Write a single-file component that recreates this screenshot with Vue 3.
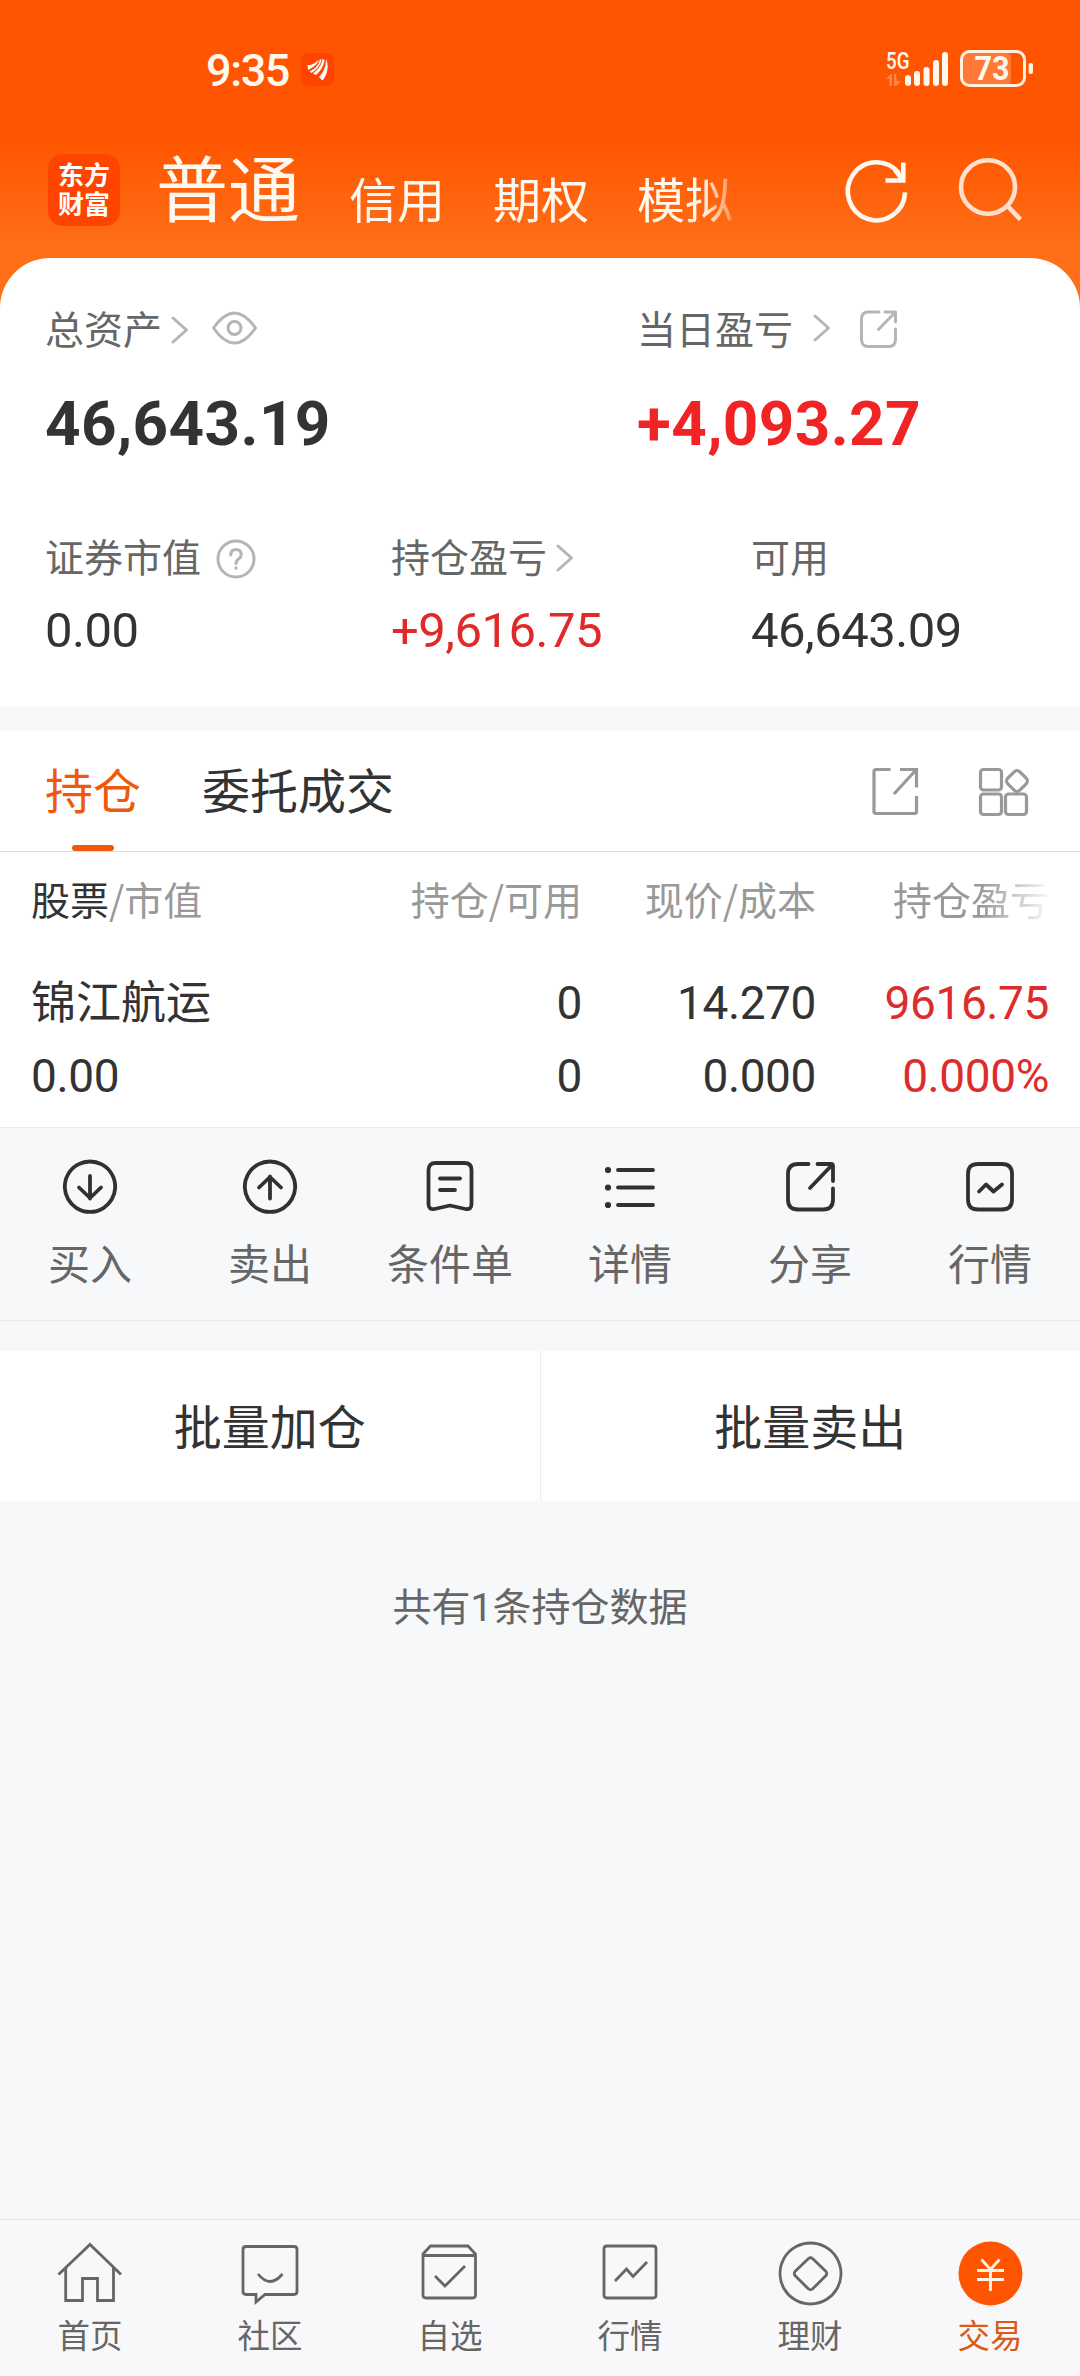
<script setup>
const accounts = ['信用', '期权', '模拟']

const columns = [
  { head: '持仓/可用', top: '0', bottom: '0', cls: 'c2' },
  { head: '现价/成本', top: '14.270', bottom: '0.000', cls: 'c3' },
  { head: '持仓盈亏', top: '9616.75', bottom: '0.000%', cls: 'c4' },
]

const actions = [
  { label: '买入', d: ['M31 3.500a25.200 25.200 0 1 1-.01 0z', 'M31 18v22.500M20 29.500l11 10.500 11-10.500'] },
  { label: '卖出', d: ['M31 3.500a25.200 25.200 0 1 1-.01 0z', 'M31 40.500V18.500M20 29.500l11-10.500 11 10.500'] },
  { label: '条件单', d: ['M16.500 5h29q7 0 7 7v34q0 6-6 5L31 47.500 15.500 51q-6 1-6-5V12q0-7 7-7z', 'M21 20.500h20M21 32h15'] },
  { label: '详情', d: ['M19 12h35M19 29.500h35M19 47h35'], dots: [12, 29.5, 47] },
  { label: '分享', d: ['M29.500 6H19Q9 6 9 16v25.500q0 10 10 10h25q10 0 10-10V30.500', 'M38.500 6H52q2 0 2 2v15M53 7L31 30'] },
  { label: '行情', d: ['M19 6h24q10 0 10 10v25.500q0 10-10 10H19q-10 0-10-10V16Q9 6 19 6z', 'M20 33.500l7-7 7.500 7 8.500-7'] },
]

const nav = [
  { label: '首页', d: ['M.5 33.500L32 3.500l31 30', 'M7.700 27v32.500H24.500V37.500h15v22H55.500V27'] },
  { label: '社区', d: ['M8 5.500h48q3 0 3 3v42q0 3-3 3H27l-9 7.500v-7.500H8q-3 0-3-3v-42q0-3 3-3z', 'M20 33q12 15 24.500 0'] },
  { label: '自选', d: ['M5 13l7.500-8h37.500l7.500 8v41q0 3-3 3H8q-3 0-3-3zM5 14.500H57.500', 'M17 35l10 10L47 25'] },
  { label: '行情', d: ['M9 5h46q3 0 3 3v46q0 3-3 3H9q-3 0-3-3V8q0-3 3-3z', 'M17 40l11.500-12 6.500 7.500L49 21'] },
  { label: '理财', d: ['M32.500 2a30.500 30.500 0 1 1-.01 0z', 'M34.500 17.500l13.500 13q1.500 2 0 4l-13.500 13.500q-2 1.500-4 0L17 34.500q-1.500-2 0-4l13.500-13q2-1.500 4 0z'] },
  { label: '交易', active: true },
]
</script>

<template>
  <div class="app">
    <header class="header">
      <div class="status">
        <div class="status-left">
          <span class="time">9:35</span>
          <svg class="badge" width="33" height="33" viewBox="0 0 33 33">
            <rect width="33" height="33" rx="7" fill="#ff4400" />
            <path d="M6.500 12c5 .5 9-3 11.500-5.500-1 4-5.500 8-11 10.500zM19 6l1.500 1c-1 5-5 10-10 13l-2-1.500C14 16 18 12 19 6zM21.500 6l2 1c-.5 6-4 11-8.500 15l-3-1.500c5-3.500 9-9 9.500-14.500zM25 6c3 6 2 15-3.500 21.500L18 24c5-5 7-11 7-18z" fill="#fff" />
          </svg>
        </div>
        <svg class="signals" width="150" height="40" viewBox="0 0 150 40">
          <text x="0" y="19" class="net" textLength="23.500" lengthAdjust="spacingAndGlyphs">5G</text>
          <g fill="#ff8a4d">
            <path d="M0 29l5-5h1v12H3.500v-7zM8 24h2.500v7H15l-5 5H8z" />
          </g>
          <g fill="#fff8ee">
            <rect x="19" y="25" width="6" height="11" rx="3" />
            <rect x="28" y="21" width="6" height="15" rx="3" />
            <rect x="37.500" y="17" width="6" height="19" rx="3" />
            <rect x="47" y="10" width="6" height="26" rx="3" />
            <rect x="56" y="2" width="6" height="34" rx="3" />
          </g>
          <rect x="77" y="3" width="48" height="32" rx="4" fill="#ff7836" />
          <rect x="75.500" y="1.500" width="63" height="34" rx="8" fill="none" stroke="#fff0df" stroke-width="3" />
          <rect x="142.500" y="13" width="4.500" height="11" rx="2" fill="#fff0df" />
          <text x="88.500" y="30" class="level" textLength="35" lengthAdjust="spacingAndGlyphs">73</text>
        </svg>
      </div>
      <div class="topnav">
        <div class="logo">东方<br />财富</div>
        <div class="accounts">
          <span class="current">普通</span>
          <span v-for="a in accounts" :key="a" class="account">{{ a }}</span>
        </div>
        <svg class="tool-icons" width="180" height="70" viewBox="0 0 180 70" fill="none" stroke-width="4.600">
          <path d="M65 37.300A28.600 29 0 1 1 59 18.500M45.500 25.500H63.300V7.500M63 25L55 15" stroke="#fff8ee" />
          <g stroke="#ffe0cc"><ellipse cx="148" cy="32" rx="27" ry="26.800" /><path d="M167.500 51l13 13.500" /></g>
        </svg>
      </div>
    </header>

    <section class="assets">
      <div class="primary">
        <div class="total">
          <div class="label">
            总资产
            <svg class="chev" width="18" height="28" viewBox="0 0 18 28"><path d="M2 2l13.500 12L2 26" /></svg>
            <svg class="eye" width="47" height="34" viewBox="0 0 47 34">
              <path d="M2.500 17Q23.500-13 44.500 17Q23.500 47 2.500 17z" /><circle cx="23.500" cy="17" r="6.500" />
            </svg>
          </div>
          <div class="big">46,643.19</div>
        </div>
        <div class="today">
          <div class="label">
            当日盈亏
            <svg class="chev far" width="18" height="28" viewBox="0 0 18 28"><path d="M2 2l13.500 12L2 26" /></svg>
            <svg class="share" width="40" height="40" viewBox="0 0 40 40">
              <path d="M20 3H9.500q-7 0-7 7v20.500q0 7 7 7h20q7 0 7-7V20M26 3h10.500v10M36 3.500L19.500 20.500" />
            </svg>
          </div>
          <div class="big red">+4,093.27</div>
        </div>
      </div>
      <div class="secondary">
        <div class="s1">
          <div class="label">
            证券市值
            <svg class="help" width="40" height="40" viewBox="0 0 40 40">
              <circle cx="20" cy="20" r="18" />
              <path d="M14.800 16q0-5.500 5.200-5.500t5.200 5q0 2.500-2.600 4.500-2.600 1.800-2.600 4.500" /><path d="M20 28.500v.8" />
            </svg>
          </div>
          <div class="value">0.00</div>
        </div>
        <div class="s2">
          <div class="label">
            持仓盈亏
            <svg class="chev" width="18" height="28" viewBox="0 0 18 28"><path d="M2 2l13.500 12L2 26" /></svg>
          </div>
          <div class="value red">+9,616.75</div>
        </div>
        <div class="s3">
          <div class="label">可用</div>
          <div class="value">46,643.09</div>
        </div>
      </div>
    </section>

    <nav class="tabs">
      <div class="tab active">持仓</div>
      <div class="tab">委托成交</div>
      <svg class="tab-icons" width="160" height="52" viewBox="0 0 160 52">
        <path d="M19.500 3.500H5q-2 0-2 2v40q0 2 2 2h38.500q2 0 2-2V30M29 3.500h16.500v18M45 4L23 28" />
        <rect x="109.500" y="3.500" width="21" height="20.500" rx="3" />
        <rect x="109.500" y="28" width="21" height="20.500" rx="3" />
        <rect x="134.500" y="28" width="21" height="20.500" rx="3" />
        <rect x="137.500" y="6.500" width="17" height="17" rx="4" transform="rotate(45 146 15)" />
      </svg>
    </nav>

    <section class="table">
      <div class="col c1">
        <div class="head"><b>股票</b>/市值</div>
        <div class="cell name">锦江航运</div>
        <div class="cell">0.00</div>
      </div>
      <div v-for="c in columns" :key="c.head" class="col" :class="c.cls">
        <div class="head">{{ c.head }}</div>
        <div class="cell">{{ c.top }}</div>
        <div class="cell">{{ c.bottom }}</div>
      </div>
    </section>

    <section class="actions">
      <div v-for="a in actions" :key="a.label" class="action">
        <svg width="62" height="58" viewBox="0 0 62 58">
          <path v-for="p in a.d" :key="p" :d="p" />
          <circle v-for="y in a.dots || []" :key="y" cx="9" :cy="y" r="3.100" class="dot" />
        </svg>
        <span>{{ a.label }}</span>
      </div>
    </section>

    <section class="batch">
      <div>批量加仓</div>
      <div>批量卖出</div>
    </section>

    <p class="summary">共有<span>1</span>条持仓数据</p>

    <footer class="bottom">
      <div v-for="n in nav" :key="n.label" class="item" :class="{ on: n.active }">
        <svg width="65" height="65" viewBox="0 0 65 65">
          <template v-if="n.active">
            <circle cx="32.500" cy="32.500" r="32" class="coin" />
            <path d="M23.500 18.500l9 10 9-10M19 29.500h27M19 38.500h27M32.500 28v22" class="yen" />
          </template>
          <path v-for="p in n.d || []" :key="p" :d="p" />
        </svg>
        <span>{{ n.label }}</span>
      </div>
    </footer>
  </div>
</template>

<style>
body {
  background: #f7f8fa;
}
</style>

<style scoped>
.app {
  width: 1080px;
  height: 2376px;
  display: flex;
  flex-direction: column;
  overflow: hidden;
  background: #f7f8fa;
  color: #333;
  font-family: "Noto Sans CJK SC", sans-serif;
}
svg {
  display: block;
  flex: none;
  overflow: visible;
}
.header {
  height: 318px;
  flex: none;
  background: linear-gradient(#ff5500 0, #ff5500 138px, #ff6e18 245px, #ff6e18 100%);
}
.status {
  height: 140px;
  display: flex;
  justify-content: space-between;
  padding: 0 44px 0 206px;
}
.status-left {
  display: flex;
  padding-top: 50px;
}
.time {
  width: 95px;
  font: 500 45px/42px Roboto, sans-serif;
  letter-spacing: -1.4px;
  color: #fff8ee;
}
.badge {
  margin-top: 3px;
}
.signals {
  margin-top: 50px;
}
.net {
  font: 500 24px Roboto, sans-serif;
  fill: #fff8ee;
}
.level {
  font: 700 33px Roboto, sans-serif;
  fill: #fff8ee;
}
.topnav {
  display: flex;
  align-items: flex-start;
  height: 100px;
  padding-left: 48px;
}
.logo {
  width: 72px;
  height: 72px;
  margin-top: 14px;
  border-radius: 15px;
  background: #ff4400;
  color: #fff;
  font-weight: 700;
  font-size: 26px;
  line-height: 29px;
  text-align: center;
  padding-top: 5px;
  box-sizing: border-box;
}
.accounts {
  display: flex;
  align-items: flex-start;
  width: 586px;
  height: 110px;
  margin-left: 36px;
  white-space: nowrap;
  color: #fff8ee;
  -webkit-mask-image: linear-gradient(90deg, #000 545px, transparent 592px);
  mask-image: linear-gradient(90deg, #000 545px, transparent 592px);
}
.current {
  font-size: 72px;
  line-height: 106px;
  margin: -8px 48px 0 0;
}
.account {
  font-size: 48px;
  line-height: 70px;
  margin: 22px 48px 0 1px;
}
.account + .account {
  margin-left: 0;
}
.tool-icons {
  margin: 15px 0 0 98px;
}
.assets {
  height: 449px;
  margin-top: -60px;
  flex: none;
  border-radius: 50px 50px 0 0;
  background: #fff;
  box-sizing: border-box;
  padding: 46px 0 0 45px;
}
.primary,
.secondary {
  display: flex;
}
.label {
  display: flex;
  align-items: center;
  height: 46px;
  font-size: 39px;
  line-height: 46px;
  color: #666;
  white-space: nowrap;
}
.label svg {
  fill: none;
  stroke: #b5b5b5;
  stroke-width: 3;
  stroke-linecap: round;
  stroke-linejoin: round;
}
.total {
  width: 592px;
}
.chev {
  margin: 6px 0 0 9px;
}
.chev.far {
  margin: 2px 0 0 20px;
}
.eye {
  margin: 2px 0 0 22px;
}
.share {
  margin: 3px 0 0 28px;
}
.help {
  margin: 7px 0 0 15px;
}
.big {
  margin-top: 43px;
  height: 61px;
  font: 700 62px/61px Roboto, sans-serif;
  letter-spacing: 0.4px;
  color: #333;
}
.secondary {
  margin-top: 78px;
}
.s1 {
  width: 346px;
}
.s2 {
  width: 360px;
}
.value {
  margin-top: 25px;
  font: 400 49px/56px Roboto, sans-serif;
  letter-spacing: -0.5px;
  color: #333;
}
.value.red {
  color: #e02a2a;
}
.big.red {
  color: #f02424;
}
.tabs {
  display: flex;
  align-items: stretch;
  height: 120px;
  flex: none;
  margin-top: 24px;
  padding-left: 45px;
  background: #fff;
  border-bottom: 1px solid #dcdcdc;
}
.tab {
  position: relative;
  margin-right: 61px;
  font-size: 48px;
  line-height: 115px;
}
.tab.active {
  color: #f0590c;
}
.tab.active::after {
  content: "";
  position: absolute;
  left: 27px;
  bottom: 0;
  width: 42px;
  height: 6px;
  border-radius: 3px;
  background: #f0590c;
}
.tab-icons {
  margin: 35px 49px 0 auto;
  fill: none;
  stroke: #999;
  stroke-width: 3.2;
}
.table {
  display: flex;
  height: 276px;
  flex: none;
  padding: 0 31px 0 31px;
  background: #fff;
  border-bottom: 1px solid #ebebeb;
  box-sizing: border-box;
}
.col {
  text-align: right;
  white-space: nowrap;
}
.c1 {
  width: 300px;
  text-align: left;
}
.c2 {
  width: 251px;
}
.c3 {
  width: 234px;
}
.c4 {
  width: 233px;
}
.head {
  height: 96px;
  font-size: 39px;
  line-height: 93px;
  color: #999;
}
.head b {
  font-weight: 400;
  color: #333;
}
.cell {
  height: 73px;
  font: 400 46px/111px Roboto, sans-serif;
  letter-spacing: -0.4px;
  color: #333;
}
.name {
  font: 400 45px/104px "Noto Sans CJK SC", sans-serif;
  letter-spacing: 0;
}
.c4 .cell {
  color: #dc2c2c;
}
.c4 .head {
  -webkit-mask-image: linear-gradient(90deg, #000 165px, transparent 238px);
  mask-image: linear-gradient(90deg, #000 165px, transparent 238px);
}
.actions {
  display: flex;
  height: 193px;
  flex: none;
  border-bottom: 1px solid #ebebeb;
  box-sizing: border-box;
}
.action {
  width: 180px;
  display: flex;
  flex-direction: column;
  align-items: center;
  padding-top: 30px;
  font-size: 42px;
  line-height: 50px;
  color: #666;
}
.action svg {
  fill: none;
  stroke: #303232;
  stroke-width: 3.8;
  stroke-linecap: round;
  stroke-linejoin: round;
}
.action .dot {
  fill: #303232;
  stroke: none;
}
.action span {
  margin-top: 21px;
}
.batch {
  display: flex;
  height: 150px;
  flex: none;
  margin-top: 30px;
  background: #fff;
}
.batch div {
  flex: 1;
  text-align: center;
  font-size: 48px;
  line-height: 146px;
}
.batch div:first-child {
  border-right: 1px solid #ededed;
}
.summary {
  margin: 76px 0 0;
  text-align: center;
  font-size: 39px;
  line-height: 54px;
  color: #666;
}
.summary span {
  font-family: Roboto, sans-serif;
}
.bottom {
  display: flex;
  height: 156px;
  flex: none;
  margin-top: auto;
  background: #f8f8fa;
  border-top: 1px solid #dfe1e3;
}
.item {
  width: 180px;
  display: flex;
  flex-direction: column;
  align-items: center;
  padding-top: 21px;
  font-size: 32.5px;
  line-height: 40px;
  color: #666;
}
.item svg {
  fill: none;
  stroke: #666;
  stroke-width: 2.8;
}
.item span {
  margin-top: 8px;
}
.item .coin {
  fill: #ff5500;
  stroke: none;
}
.item .yen {
  stroke: #fff3e8;
}
.on {
  color: #d95b16;
}
</style>
